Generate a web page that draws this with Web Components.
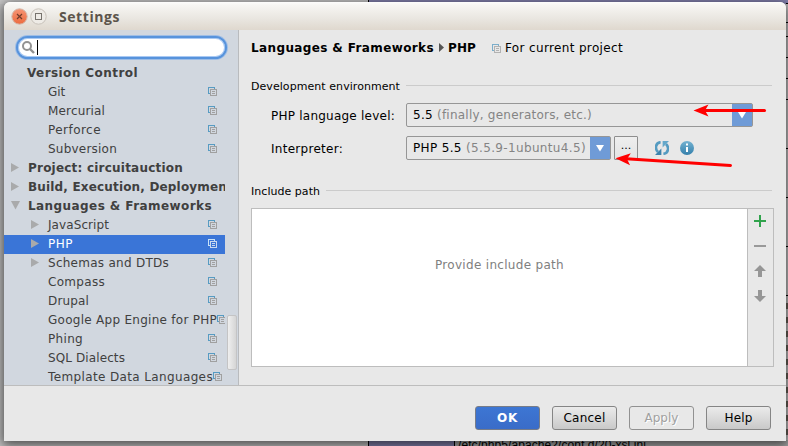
<!DOCTYPE html>
<html lang="en">
<head>
<meta charset="utf-8">
<title>Settings</title>
<style>
html,body{margin:0;width:788px;height:446px;overflow:hidden}
body{font:12px/19px "DejaVu Sans",sans-serif;color:#000}
</style>
</head>
<body>
<settings-desktop></settings-desktop>
<script>
const define = (name, html, setup) => customElements.define(name, class extends HTMLElement {
  connectedCallback() {
    if (this.shadowRoot) return;
    const t = document.createElement('template');
    t.innerHTML = html;
    this.attachShadow({mode: 'open'}).append(t.content.cloneNode(true));
    if (setup) setup(this, this.shadowRoot);
  }
});

/* A single line of text whose tracking is adjusted to a set width. */
define('fit-text', `<style>:host{display:inline-block;white-space:pre;flex:none}span{display:inline-block}</style><span><slot></slot></span>`, (el, root) => {
  const s = root.querySelector('span'), w = +el.getAttribute('w'), n = el.textContent.length;
  if (w) {
    const d = (w - s.getBoundingClientRect().width) / n;
    s.style.letterSpacing = d.toFixed(3) + 'px';
  }
});

define('project-icon', `<style>:host{display:block;width:9px;height:9px;flex:none;color:#a0a0a0;--back:#579bc2}svg{display:block}</style>
<svg width="9" height="9" viewBox="0 0 9 9" fill="none" shape-rendering="crispEdges"><path d="M2 6.5H.5V.5H6.5V2" style="stroke:var(--back)"/><path d="M2.5 2.5H8.5V8.5H2.5ZM4 4.5H7M4 6.5H7" stroke="currentColor"/></svg>`);

define('tree-row', `<style>
:host{display:flex;height:19px;align-items:flex-start;color:#404040;width:221px;box-sizing:border-box;overflow:hidden;flex:none}
:host([bold]){font-weight:bold}
:host([selected]){background:#3a75d7;color:#fff}
:host([selected]) project-icon{color:#c9d9ef;--back:#c9e3f8}
.a{width:8px;height:9px;flex:none;margin-top:4px}
.a svg{display:block}
.t{flex:1;display:flex}
project-icon{margin:4px 8px 0 0}
:host([tight]) .t{flex:none}
</style><div class="a"></div><div class="t"><slot></slot></div>`, (el, r) => {
  const a = r.querySelector('.a'), k = el.getAttribute('arrow');
  const bold = el.hasAttribute('bold');
  el.style.paddingLeft = (bold ? 7 : 27) + 'px';
  a.style.marginRight = bold && !k ? '8px' : '9px';
  if (k) a.innerHTML = `<svg width="9" height="9" viewBox="0 0 9 9"><path fill="#a9aaab" d="${k === 'down' ? 'M0 0H9L4.5 8.5Z' : 'M0 0L8 4.5L0 9Z'}"/></svg>`;
  if (!bold) r.append(document.createElement('project-icon'));
});

define('search-field', `<style>
:host{display:flex;box-sizing:border-box;width:211px;height:23px;border-radius:12px;background:#fff;border:2px solid #5793dc;box-shadow:0 0 0 1px #9dbde6,inset 0 0 0 1px #a9c9f3;align-items:center;padding-left:4px;flex:none}
i{width:1px;height:15px;background:#000;margin-left:2px}
</style><svg width="13" height="13" viewBox="0 0 13 13" fill="none" stroke="#929292"><circle cx="5" cy="5" r="4" stroke-width="2"/><path d="M8 8L12 12" stroke-width="2.4"/></svg><i></i>`);

define('title-bar', `<style>
:host{display:flex;align-items:center;height:28px;box-sizing:border-box;padding:1px 0 0 7px;background:linear-gradient(#fdfdfc 0,#f7f6f3 3px,#e9e6e0 60%,#dfd8ce);border-radius:6px 6px 0 0;flex:none;font:bold 14px/20px "Open Sans",sans-serif;color:#5c544b}
svg{display:block;margin-right:2px}fit-text{margin-left:10px}
</style>
<svg width="17" height="17"><defs><linearGradient id="o" x2="0" y2="1"><stop stop-color="#f69474"/><stop offset="1" stop-color="#ec6b3e"/></linearGradient></defs><circle cx="8.5" cy="8.5" r="7.7" fill="url(#o)" stroke="#d4b8aa"/><path d="M6 6L11 11M11 6L6 11" stroke="#713c2b" stroke-width="1.2"/></svg>
<svg width="17" height="17"><circle cx="8.5" cy="8.5" r="7.7" fill="#eeebe6" stroke="#c8c2ba"/><rect x="5.5" y="5.5" width="6" height="6" fill="none" stroke="#77736d"/></svg>
<fit-text w="61">Settings</fit-text>`);

define('side-tree', `<style>
:host{display:flex;flex-direction:column;width:234px;background:#d1d7df;border-right:1px solid #b9bbbe;overflow:hidden;position:relative;flex:none}
search-field{margin:6px 0 5px 12px}
.thumb{position:absolute;left:223px;top:285px;width:8px;height:53px;border:1px solid #c4c4c5;border-radius:2px;background:linear-gradient(90deg,#efefef,#d5d5d5)}
</style><search-field></search-field>
<tree-row bold><fit-text w="111">Version Control</fit-text></tree-row>
<tree-row><fit-text w="17">Git</fit-text></tree-row>
<tree-row><fit-text w="57">Mercurial</fit-text></tree-row>
<tree-row><fit-text w="53">Perforce</fit-text></tree-row>
<tree-row><fit-text w="69">Subversion</fit-text></tree-row>
<tree-row bold arrow="right"><fit-text w="155">Project: circuitauction</fit-text></tree-row>
<tree-row bold arrow="right"><fit-text w="199">Build, Execution, Deploymen</fit-text></tree-row>
<tree-row bold arrow="down"><fit-text w="184">Languages &amp; Frameworks</fit-text></tree-row>
<tree-row arrow="right"><fit-text w="61">JavaScript</fit-text></tree-row>
<tree-row arrow="right" selected><fit-text w="25">PHP</fit-text></tree-row>
<tree-row arrow="right"><fit-text w="121">Schemas and DTDs</fit-text></tree-row>
<tree-row><fit-text w="57">Compass</fit-text></tree-row>
<tree-row><fit-text w="41">Drupal</fit-text></tree-row>
<tree-row tight><fit-text w="169">Google App Engine for PHP</fit-text></tree-row>
<tree-row><fit-text w="35">Phing</fit-text></tree-row>
<tree-row><fit-text w="77">SQL Dialects</fit-text></tree-row>
<tree-row tight><fit-text w="165">Template Data Languages</fit-text></tree-row>
<div class="thumb"></div>`);

define('section-title', `<style>:host{display:flex;align-items:center;height:16px;width:521px;font-size:11px;line-height:16px}
i{flex:1;height:1px;background:#cbcbcb;margin-left:6px;position:relative;top:-2px}</style><slot></slot><i></i>`);

define('combo-box', `<style>:host{display:flex;height:24px;box-sizing:border-box;border:1px solid #969696;border-radius:2px;align-items:center;padding-left:6px;flex:none;background:#e8e8e8}
.t{flex:1;display:flex;white-space:pre}.b{width:20px;height:22px;background:#6f9bd7;display:flex;align-items:center;justify-content:center}
</style><div class="t"><slot></slot></div><div class="b"><svg width="8" height="7"><path fill="#fff" d="M0 0H8L4 6.5Z"/></svg></div>`);

define('push-button', `<style>:host{display:flex;box-sizing:border-box;width:65px;height:24px;border:1px solid #858585;border-radius:3px;align-items:center;justify-content:center;background:linear-gradient(#ebebeb,#c9c9c9);flex:none}
:host([primary]){background:linear-gradient(#3d76d3,#3a6cc8);color:#fff;font-weight:bold;border-color:#777c88}
:host([disabled]){background:#e8e8e8;color:#a0a0a0;text-shadow:1px 1px #fff;border-color:#919191}</style><slot></slot>`);

define('path-list', `<style>:host{display:flex;box-sizing:border-box;width:523px;height:159px;border:1px solid #bdbdbd;background:#fff}
.l{flex:1;display:flex;justify-content:center;padding-top:47px;color:#808080}
.b{border-left:1px solid #bdbdbd;background:#e8e8e8;display:flex;flex-direction:column;align-items:flex-start;gap:13px;padding-top:6px;padding-left:6px;box-sizing:border-box;width:26px}
svg{display:block;flex:none}</style>
<div class="l"><fit-text w="129">Provide include path</fit-text></div>
<div class="b">
<svg width="12" height="12"><path d="M6 0V12M0 6H12" stroke="#30a34c" stroke-width="2"/></svg>
<svg width="12" height="12"><path d="M0 6H12" stroke="#999" stroke-width="2"/></svg>
<svg width="12" height="12"><path d="M6 0L12 6H8V12H4V6H0Z" fill="#969696"/></svg>
<svg width="12" height="12"><path d="M6 12L12 6H8V0H4V6H0Z" fill="#969696"/></svg>
</div>`);

define('php-pane', `<style>
:host{display:flex;flex-direction:column;flex:1;padding-left:12px;background:#e8e8e8}
.h{display:flex;align-items:center;height:19px;margin-top:9px;font-weight:bold}
.h svg{margin:-2px 4px 0 5px}.h project-icon{margin:-1px 4px 0 16px;opacity:.75}.n{font-weight:normal}
.s1{margin-top:21px}.s2{margin-top:24px}
.r{display:flex;align-items:center;height:24px;padding-left:20px}
.lab{width:135px;padding-top:2px;box-sizing:border-box}
.g{color:#848484}
.dots{box-sizing:border-box;width:24px;height:24px;border:1px solid #8e8e8e;border-radius:1px;margin-left:3px;display:flex;justify-content:center;line-height:18px;font-size:11px;background:linear-gradient(#eee,#e4e4e4)}
path-list{margin-top:8px}
</style>
<div class="h"><fit-text w="183">Languages &amp; Frameworks</fit-text><svg width="5" height="9"><path d="M0 0L5 4.5L0 9Z" fill="#555"/></svg><fit-text w="28">PHP</fit-text><project-icon></project-icon><fit-text class="n" w="118">For current project</fit-text></div>
<section-title class="s1"><fit-text w="149">Development environment</fit-text></section-title>
<div class="r" style="margin-top:8px"><div class="lab"><fit-text w="124">PHP language level:</fit-text></div><combo-box style="width:347px"><fit-text w="24">5.5 </fit-text><fit-text class="g" w="155">(finally, generators, etc.)</fit-text></combo-box></div>
<div class="r" style="margin-top:9px"><div class="lab"><fit-text w="72">Interpreter:</fit-text></div><combo-box style="width:205px"><fit-text w="53">PHP 5.5 </fit-text><fit-text class="g" w="120">(5.5.9-1ubuntu4.5)</fit-text></combo-box><div class="dots">...</div>
<svg style="margin-left:17px" width="14" height="14" viewBox="0 0 14 14"><g fill="none" stroke="#559bc1" stroke-width="2.6"><path d="M5.6 1.2C.2 1.8 -.2 8 3 11"/><path d="M8.4 12.8C13.8 12.2 14.2 6 11 3"/></g><path fill="#3c83ad" d="M6.4 7.5V14H0Z"/><path fill="#65a8ca" d="M7.6 6.5V0H14Z"/></svg>
<svg style="margin-left:11px" width="14" height="14"><defs><linearGradient id="b" x2="0" y2="1"><stop stop-color="#74b2d1"/><stop offset="1" stop-color="#347fab"/></linearGradient></defs><circle cx="7" cy="7" r="7" fill="url(#b)"/><path d="M6 2.5H8V4.5H6ZM6 6H8V11H6Z" fill="#fff"/></svg></div>
<section-title class="s2"><fit-text w="69">Include path</fit-text></section-title>
<path-list></path-list>`);

define('settings-window', `<style>
:host{display:flex;flex-direction:column;width:782px;height:439px;border-radius:6px 6px 0 0;background:#e8e8e8;box-shadow:0 3px 12px 2px #0009;overflow:visible}
.m{display:flex;height:355px;border-bottom:1px solid #bdbdbd;flex:none}
.f{display:flex;gap:12px;justify-content:flex-end;padding:20px 15px 0 0}
</style><title-bar></title-bar><div class="m"><side-tree></side-tree><php-pane></php-pane></div>
<div class="f"><push-button primary><fit-text w="21">OK</fit-text></push-button><push-button><fit-text w="42">Cancel</fit-text></push-button><push-button disabled><fit-text w="34">Apply</fit-text></push-button><push-button><fit-text w="28">Help</fit-text></push-button></div>`);

define('settings-desktop', `<style>
:host{display:block;position:relative;width:788px;height:446px;overflow:hidden;background:#c9c9c9}
.bg{display:grid;grid-template-columns:368px 1fr;height:446px;grid-template-rows:4px 436px 6px}
.top{background:#8583b0;border-left:1px solid #000}
.left{background:#c9c9c9}
.mid{grid-column:1/3;background:#c4c4c4}
.low{background:#aaa;display:flex;border-left:1px solid #000;overflow:hidden}
.low i{width:85px;background:#8583b0;border-right:1px solid #000;flex:none}
.low fit-text{margin:-2px 0 0 3px;font:12px/15px "Liberation Sans",sans-serif}
settings-window{position:absolute;left:4px;top:2px}
.notes{position:absolute;left:0;top:0}
.edge{position:absolute;left:786px;top:0;width:2px;height:446px}
</style>
<div class="bg"><div class="left"></div><div class="top"></div><div class="mid"></div><div class="left"></div><div class="low"><i></i><fit-text w="188">/etc/php5/apache2/conf.d/20-xsl.ini</fit-text></div></div>
<settings-window></settings-window>
<svg class="edge" width="2" height="446" shape-rendering="crispEdges"><path d="M0 3.5H2M0 22.5H2M0 36.5H2M0 57.5H2M0 78.5H2M0 99.5H2M0 148.5H2M0 197.5H2M0 246.5H2M0 295.5H2" stroke="#000"/><path d="M1 303V436" stroke="#44403a" stroke-width="2" stroke-dasharray="6 8"/></svg>
<svg class="notes" width="788" height="446"><g stroke="red" stroke-width="3" stroke-linecap="round"><path d="M704 110.5H764.5"/><path d="M626 158.8L730.5 165.5"/></g><g fill="red"><path d="M693.5 110.5L708.5 104.5L705 110.5L708.5 116.5Z"/><path transform="translate(615.5 158.3) rotate(3.6)" d="M0 0L15 -6L11.5 0L15 6Z"/></g></svg>`);
</script>
</body>
</html>
